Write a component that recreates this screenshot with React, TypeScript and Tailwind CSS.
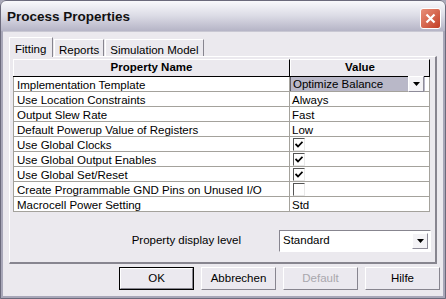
import React from "react";

const font = { fontFamily: '"Liberation Sans", Arial, sans-serif' };

function Arrow() {
  return (
    <svg width="7" height="4" viewBox="0 0 7 4">
      <path d="M0 0h7L3.5 4z" fill="#000" />
    </svg>
  );
}

function DropBtn() {
  return (
    <div className="w-[16px] h-[16px] flex items-center justify-center bg-[#f4f3f6] border-t border-l border-t-white border-l-white border-r border-b border-r-[#8e8c99] border-b-[#8e8c99]">
      <Arrow />
    </div>
  );
}

function Check({ on }: { on: boolean }) {
  return (
    <div className="w-[12px] h-[13px] mt-[1px] ml-[3px] bg-white border-t border-l border-t-[#555] border-l-[#555] border-r border-b border-r-[#e8e8e8] border-b-[#e8e8e8] flex items-center justify-center">
      {on && (
        <svg width="8" height="7" viewBox="0 0 8 7">
          <path d="M0.5 3 L3 5.5 L7.5 0.8" stroke="#000" strokeWidth="1.8" fill="none" />
        </svg>
      )}
    </div>
  );
}

const rows: [string, React.ReactNode][] = [
  ["Implementation Template", "__dd"],
  ["Use Location Constraints", "Always"],
  ["Output Slew Rate", "Fast"],
  ["Default Powerup Value of Registers", "Low"],
  ["Use Global Clocks", <Check on />],
  ["Use Global Output Enables", <Check on />],
  ["Use Global Set/Reset", <Check on />],
  ["Create Programmable GND Pins on Unused I/O", <Check on={false} />],
  ["Macrocell Power Setting", "Std"],
];

function Btn({ label, def, disabled }: { label: string; def?: boolean; disabled?: boolean }) {
  return (
    <div className={"w-[75px] h-[23px] " + (def ? "border border-black" : "")}>
      <div
        className={
          "w-full h-full flex items-center justify-center text-[11.5px] bg-[#ebe9ef] border-t border-l border-t-white border-l-white border-r border-b border-r-[#87858f] border-b-[#87858f] " +
          (disabled ? "text-[#a9a7ad]" : "text-black")
        }
      >
        {label}
      </div>
    </div>
  );
}

export default function App() {
  return (
    <div className="relative w-[446px] h-[299px] overflow-hidden bg-[#a8a7b8] p-[2px_3px_3px_3px] flex flex-col" style={font}>
      <div className="absolute left-0 top-0 w-[446px] h-[299px] border border-[#6b6a7c] rounded-t-[6px] pointer-events-none" />
      <div className="h-[31px] -mx-[3px] -mt-[2px] px-[7px] flex items-center justify-between bg-gradient-to-b from-[#fbfbfd] via-[#dcdce6] to-[#b5b4c6] rounded-t-[6px]">
        <span className="text-[13.5px] font-bold text-[#111] mt-[3px]">Process Properties</span>
        <div className="w-[21px] h-[21px] mt-[5px] mr-[-2px] rounded-[3px] bg-gradient-to-br from-[#e8907a] to-[#c23a22] border border-white flex items-center justify-center">
          <svg width="11" height="11" viewBox="0 0 11 11">
            <path d="M1.5 1.5 L9.5 9.5 M9.5 1.5 L1.5 9.5" stroke="#fff" strokeWidth="2.2" />
          </svg>
        </div>
      </div>
      <div className="flex-1 bg-[#ebe9ee] flex flex-col px-[6px] pt-[4px] pb-[6px] border-t border-[#c9c8d3]">
        <div className="flex items-end h-[20px] text-[11.5px] text-black">
          <div className="h-[20px] px-[5px] pt-[3px] bg-[#ebe9ee] border-t border-l border-t-white border-l-white border-r border-r-[#87858f] relative z-10 -mb-[1px] w-[44px]">Fitting</div>
          <div className="h-[17px] px-[4px] pt-[2px] border-t border-l border-t-white border-l-white border-r border-r-[#87858f] ml-[1px]">Reports</div>
          <div className="h-[17px] px-[4px] pt-[2px] border-t border-l border-t-white border-l-white border-r border-r-[#87858f] ml-[1px]">Simulation Model</div>
        </div>
        <div className="flex-1 border-t border-l border-t-white border-l-white border-r-2 border-b-2 border-r-[#87858f] border-b-[#87858f] p-[2px_4px_0_3px] flex flex-col">
          <div className="bg-white text-[11.5px] text-black w-[417px]">
            <div className="flex h-[18px] bg-[#ebe9ee] font-bold border-b border-black">
              <div className="w-[277px] flex items-center justify-center border-r border-black border-t border-t-white border-l border-l-white">Property Name</div>
              <div className="flex-1 flex items-center justify-center border-r border-black border-t border-t-white border-l border-l-white">Value</div>
            </div>
            {rows.map(([n, v], i) => (
              <div key={i} className="flex h-[15px] border-b border-[#a4a29c] leading-[16px]">
                <div className="w-[277px] pl-[3px] border-r border-[#a4a29c] border-l border-l-[#a4a29c] whitespace-nowrap overflow-hidden">{n}</div>
                <div className="flex-1 border-r border-[#a4a29c] pr-[4px]">
                  {v === "__dd" ? (
                    <div className="flex items-center justify-between h-[14px] bg-[#b9b8c8] pl-[2px] pr-[1px] border-l border-[#5f5e6a]">
                      <span>Optimize Balance</span>
                      <DropBtn />
                    </div>
                  ) : typeof v === "string" ? (
                    <span className="pl-[2px]">{v}</span>
                  ) : (
                    v
                  )}
                </div>
              </div>
            ))}
          </div>
          <div className="flex items-center mt-[18px] text-[11.5px] text-black">
            <div className="w-[266px] text-right pr-[38px]">Property display level</div>
            <div className="w-[152px] h-[22px] bg-white border-t border-l border-t-[#87858f] border-l-[#87858f] border-r border-b border-r-white border-b-white flex items-center justify-between pl-[3px] pr-[2px]">
              <span>Standard</span>
              <DropBtn />
            </div>
          </div>
        </div>
        <div className="flex justify-end gap-[7px] mt-[3px] -mr-[3px]">
          <Btn label="OK" def />
          <Btn label="Abbrechen" />
          <Btn label="Default" disabled />
          <Btn label="Hilfe" />
        </div>
      </div>
    </div>
  );
}
